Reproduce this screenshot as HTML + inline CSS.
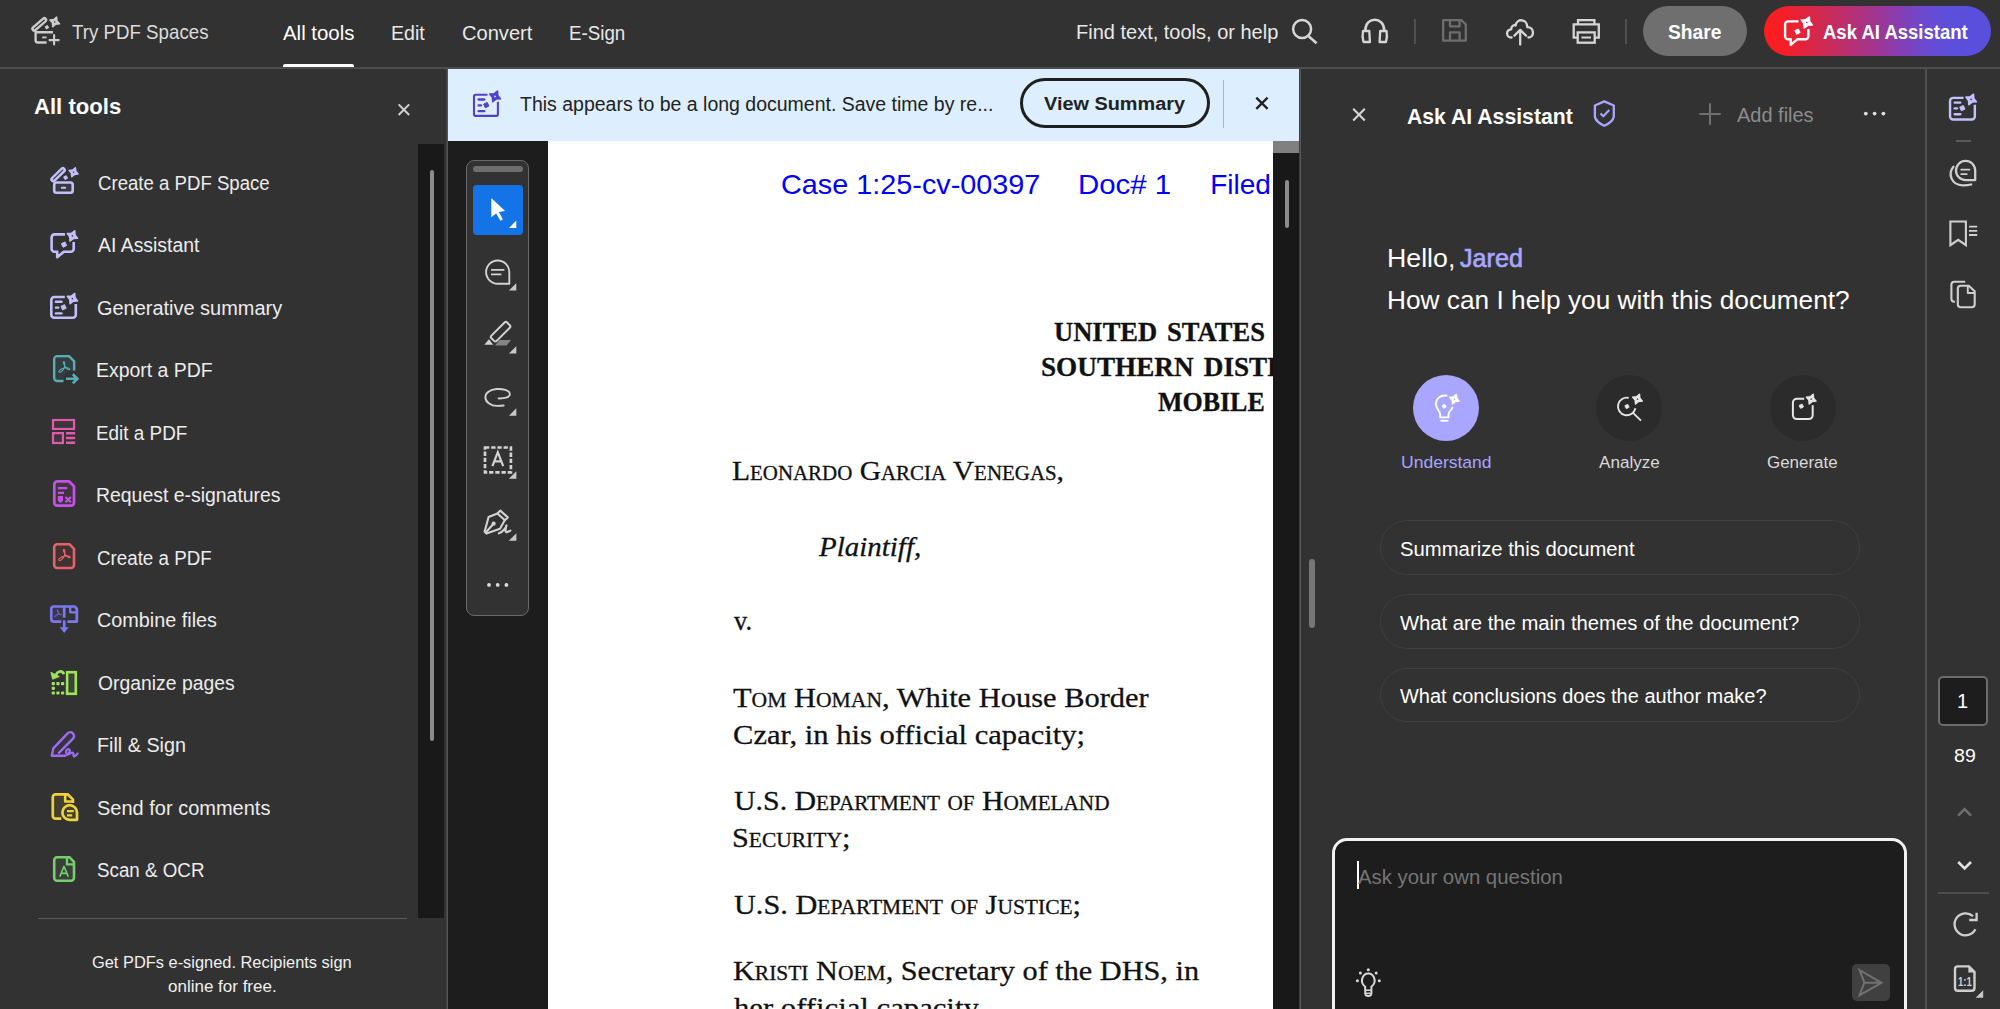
<!DOCTYPE html>
<html lang="en">
<head>
<meta charset="utf-8">
<title>Adobe Acrobat</title>
<style>
html,body{margin:0;padding:0}
body{width:2000px;height:1009px;overflow:hidden;position:relative;background:#323232;font-family:"Liberation Sans",sans-serif}
.a{position:absolute}
.t{position:absolute;white-space:nowrap;transform-origin:0 0;display:block}
svg{position:absolute;overflow:visible}
header,aside,main,nav,section{display:block;position:static;margin:0;padding:0}

#topbar{left:0;top:0;width:2000px;height:67px;background:#323232}
#topline{left:0;top:67px;width:2000px;height:2px;background:#4e4e4e}
#left{left:0;top:69px;width:446px;height:940px;background:#323232}
#leftline{left:446px;top:69px;width:2px;height:940px;background:linear-gradient(90deg,#404040 0,#404040 50%,#585858 50%,#585858 100%)}
#doc{left:448px;top:69px;width:851px;height:940px;background:#1d1d1d;overflow:hidden}
#banner{left:448px;top:69px;width:851px;height:72px;background:#ddefff}
#page{left:548px;top:141px;width:725px;height:868px;background:#fff;overflow:hidden}
#docline{left:1299px;top:69px;width:2px;height:940px;background:linear-gradient(90deg,#404040 0,#404040 50%,#585858 50%,#585858 100%)}
#right{left:1301px;top:69px;width:624px;height:940px;background:#323232}
#railline{left:1925px;top:69px;width:2px;height:940px;background:#4e4e4e}
#rail{left:1927px;top:69px;width:73px;height:940px;background:#323232}
.pill{left:1379.5px;width:480.5px;height:54.5px;box-sizing:border-box;border:1.5px solid #3f3f3f;border-radius:28px}
.circ{width:66px;height:66px;border-radius:50%;top:374.5px}
</style>
</head>
<body>
<!-- ================= top application bar ================= -->
<header id="appbar">
<div class="a" id="topbar"></div>
<div class="a" id="topline"></div>
<div class="a" style="left:283px;top:64px;width:71px;height:3px;background:#fff;border-radius:2px 2px 0 0"></div>
<div class="a" style="left:1414px;top:19px;width:1.5px;height:25px;background:#505050"></div>
<div class="a" style="left:1625px;top:19px;width:1.5px;height:25px;background:#505050"></div>
<div class="a" id="share-btn" style="left:1643px;top:6px;width:103.5px;height:50px;border-radius:25px;background:#6f6f6f"></div>
<div class="a" id="askai-btn" style="left:1764px;top:6px;width:227px;height:50px;border-radius:25px;background:linear-gradient(90deg,#ff1c1c 0%,#f21f2a 10%,#cc2a55 27%,#a03590 49%,#8040b8 62%,#6a4ad0 71%,#5b4fdc 82%,#5a4fdd 100%)"></div>
<span class="t" id="t0" style='left:71.56px;top:18.87px;font:400 20.3px/26.39px "Liberation Sans", sans-serif;color:#dcdcdc;transform:scaleX(0.9221);'>Try PDF Spaces</span>
<span class="t" id="t1" style='left:283.34px;top:19.57px;font:400 20.5px/26.65px "Liberation Sans", sans-serif;color:#ffffff;transform:scaleX(0.9956);'>All tools</span>
<span class="t" id="t2" style='left:391.01px;top:19.57px;font:400 20.5px/26.65px "Liberation Sans", sans-serif;color:#e8e8e8;transform:scaleX(0.9569);'>Edit</span>
<span class="t" id="t3" style='left:461.61px;top:19.57px;font:400 20.5px/26.65px "Liberation Sans", sans-serif;color:#e8e8e8;transform:scaleX(0.9805);'>Convert</span>
<span class="t" id="t4" style='left:568.54px;top:19.57px;font:400 20.5px/26.65px "Liberation Sans", sans-serif;color:#e8e8e8;transform:scaleX(0.9147);'>E-Sign</span>
<span class="t" id="t5" style='left:1075.75px;top:19.47px;font:400 20.5px/26.65px "Liberation Sans", sans-serif;color:#e8e8e8;transform:scaleX(0.9755);'>Find text, tools, or help</span>
<span class="t" id="t6" style='left:1667.90px;top:19.22px;font:700 20.5px/26.65px "Liberation Sans", sans-serif;color:#ffffff;transform:scaleX(0.9388);'>Share</span>
<span class="t" id="t7" style='left:1822.50px;top:19.22px;font:700 20.5px/26.65px "Liberation Sans", sans-serif;color:#ffffff;transform:scaleX(0.9031);'>Ask AI Assistant</span>
</header>

<!-- ================= left "All tools" panel ================= -->
<aside id="tools-panel">
<div class="a" id="left"></div>
<div class="a" id="leftline"></div>
<div class="a" style="left:418px;top:144px;width:26px;height:773.5px;background:#191919"></div>
<div class="a" style="left:430px;top:170px;width:3.5px;height:571px;background:#8c8c8c;border-radius:2px"></div>
<div class="a" style="left:38px;top:917.7px;width:369px;height:1.5px;background:#5c5c5c"></div>
<span class="t" id="t8" style='left:34.01px;top:93.48px;font:700 22.3px/28.99px "Liberation Sans", sans-serif;color:#ffffff;transform:scaleX(0.9922);'>All tools</span>
<span class="t" id="t9" style='left:97.52px;top:170.52px;font:400 19.6px/25.48px "Liberation Sans", sans-serif;color:#ececec;transform:scaleX(0.9497);'>Create a PDF Space</span>
<span class="t" id="t10" style='left:97.56px;top:233.02px;font:400 19.6px/25.48px "Liberation Sans", sans-serif;color:#ececec;transform:scaleX(0.9913);'>AI Assistant</span>
<span class="t" id="t11" style='left:97.39px;top:295.52px;font:400 19.6px/25.48px "Liberation Sans", sans-serif;color:#ececec;transform:scaleX(1.0179);'>Generative summary</span>
<span class="t" id="t12" style='left:96.24px;top:358.02px;font:400 19.6px/25.48px "Liberation Sans", sans-serif;color:#ececec;transform:scaleX(0.9919);'>Export a PDF</span>
<span class="t" id="t13" style='left:96.39px;top:420.52px;font:400 19.6px/25.48px "Liberation Sans", sans-serif;color:#ececec;transform:scaleX(0.9641);'>Edit a PDF</span>
<span class="t" id="t14" style='left:96.23px;top:483.02px;font:400 19.6px/25.48px "Liberation Sans", sans-serif;color:#ececec;transform:scaleX(0.9910);'>Request e-signatures</span>
<span class="t" id="t15" style='left:97.47px;top:545.52px;font:400 19.6px/25.48px "Liberation Sans", sans-serif;color:#ececec;transform:scaleX(0.9574);'>Create a PDF</span>
<span class="t" id="t16" style='left:97.39px;top:608.02px;font:400 19.6px/25.48px "Liberation Sans", sans-serif;color:#ececec;transform:scaleX(1.0107);'>Combine files</span>
<span class="t" id="t17" style='left:97.66px;top:670.52px;font:400 19.6px/25.48px "Liberation Sans", sans-serif;color:#ececec;transform:scaleX(0.9875);'>Organize pages</span>
<span class="t" id="t18" style='left:96.76px;top:733.02px;font:400 19.6px/25.48px "Liberation Sans", sans-serif;color:#ececec;transform:scaleX(1.0090);'>Fill &amp; Sign</span>
<span class="t" id="t19" style='left:97.04px;top:795.52px;font:400 19.6px/25.48px "Liberation Sans", sans-serif;color:#ececec;transform:scaleX(1.0207);'>Send for comments</span>
<span class="t" id="t20" style='left:97.19px;top:858.02px;font:400 19.6px/25.48px "Liberation Sans", sans-serif;color:#ececec;transform:scaleX(0.9583);'>Scan &amp; OCR</span>
<span class="t" id="t21" style='left:91.98px;top:951.96px;font:400 17px/22.1px "Liberation Sans", sans-serif;color:#f0f0f0;transform:scaleX(0.9644);'>Get PDFs e-signed. Recipients sign</span>
<span class="t" id="t22" style='left:167.82px;top:975.96px;font:400 17px/22.1px "Liberation Sans", sans-serif;color:#f0f0f0;transform:scaleX(0.9996);'>online for free.</span>
</aside>

<!-- ================= document viewer ================= -->
<main id="viewer">
<div class="a" id="doc"></div>
<div class="a" id="page"></div>
<div class="a" style="left:1273px;top:141px;width:26px;height:868px;background:#181818"></div>
<div class="a" style="left:1273px;top:141px;width:26px;height:12px;background:#808080"></div>
<div class="a" style="left:1285.3px;top:180px;width:3.4px;height:48px;background:#8c8c8c;border-radius:2px"></div>
<div class="a" id="docline"></div>
<section id="summary-banner">
<div class="a" id="banner"></div>
<div class="a" style="left:1019.5px;top:77.7px;width:190.5px;height:50.4px;box-sizing:border-box;border:3px solid #1f1f1f;border-radius:26px"></div>
<div class="a" style="left:1223px;top:80px;width:1px;height:48px;background:#b9b3aa"></div>
<span class="t" id="t23" style='left:520.36px;top:91.77px;font:400 19.6px/25.48px "Liberation Sans", sans-serif;color:#222222;transform:scaleX(0.9947);'>This appears to be a long document. Save time by re...</span>
<span class="t" id="t24" style='left:1044.06px;top:92.37px;font:700 18.9px/24.57px "Liberation Sans", sans-serif;color:#222222;transform:scaleX(1.0517);'>View Summary</span>
</section>
<nav id="quick-tools">
<div class="a" style="left:466px;top:160px;width:63px;height:456px;box-sizing:border-box;border:1.5px solid #6a6a6a;border-radius:8px;background:#323232"></div>
<div class="a" style="left:472.8px;top:166px;width:50px;height:6px;border-radius:3px;background:#6e6e6e"></div>
<div class="a" style="left:472.8px;top:185px;width:50.4px;height:50px;border-radius:4px;background:#1473e6"></div>
</nav>
<div class="a" id="pageclip" style="left:548px;top:141px;width:725px;height:868px;overflow:hidden"><div class="a" style="left:-548px;top:-141px;width:2000px;height:1009px">
<span class="t" id="d0" style='left:781.44px;top:166.90px;font:400 28px/36.4px "Liberation Sans", sans-serif;color:#0000ff;transform:scaleX(1.0286);'>Case 1:25-cv-00397</span>
<span class="t" id="d1" style='left:1078.27px;top:166.90px;font:400 28px/36.4px "Liberation Sans", sans-serif;color:#0000ff;transform:scaleX(1.0509);'>Doc# 1</span>
<span class="t" id="d2" style='left:1210.20px;top:166.90px;font:400 28px/36.4px "Liberation Sans", sans-serif;color:#0000ff;transform:scaleX(1.0000);'>Filed 07/29/25</span>
<span class="t" id="d3" style='left:1054.20px;top:313.80px;font:700 28.2px/36.66px "Liberation Serif", serif;color:#111;transform:scaleX(0.9411);word-spacing:3.5px;-webkit-text-stroke:0.3px #111;'>UNITED STATES DISTRICT COURT</span>
<span class="t" id="d4" style='left:1041.10px;top:349.10px;font:700 28.2px/36.66px "Liberation Serif", serif;color:#111;transform:scaleX(0.9646);word-spacing:3.5px;-webkit-text-stroke:0.3px #111;'>SOUTHERN DISTRICT OF ALABAMA</span>
<span class="t" id="d5" style='left:1158.20px;top:383.80px;font:700 28.2px/36.66px "Liberation Serif", serif;color:#111;transform:scaleX(0.9207);word-spacing:3.5px;-webkit-text-stroke:0.3px #111;'>MOBILE DIVISION</span>
<span class="t" id="d6" style='left:732.33px;top:453.20px;font:400 28.2px/36.66px "Liberation Serif", serif;color:#111;transform:scaleX(1.0458);font-variant:small-caps;-webkit-text-stroke:0.3px #111;'>Leonardo Garcia Venegas,</span>
<span class="t" id="d7" style='left:819.19px;top:529.30px;font:400 28.2px/36.66px "Liberation Serif", serif;color:#111;transform:scaleX(1.0275);-webkit-text-stroke:0.3px #111;'><i>Plaintiff,</i></span>
<span class="t" id="d8" style='left:733.78px;top:603.10px;font:400 28.2px/36.66px "Liberation Serif", serif;color:#111;transform:scaleX(0.9311);-webkit-text-stroke:0.3px #111;'>v.</span>
<span class="t" id="d9" style='left:732.97px;top:680.20px;font:400 28.2px/36.66px "Liberation Serif", serif;color:#111;transform:scaleX(1.0803);-webkit-text-stroke:0.3px #111;'><span style="font-variant:small-caps">Tom Homan</span>, White House Border</span>
<span class="t" id="d10" style='left:732.61px;top:717.30px;font:400 28.2px/36.66px "Liberation Serif", serif;color:#111;transform:scaleX(1.0840);-webkit-text-stroke:0.3px #111;'>Czar, in his official capacity;</span>
<span class="t" id="d11" style='left:733.60px;top:782.90px;font:400 28.2px/36.66px "Liberation Serif", serif;color:#111;transform:scaleX(1.0591);font-variant:small-caps;-webkit-text-stroke:0.3px #111;'>U.S. Department of Homeland</span>
<span class="t" id="d12" style='left:732.45px;top:820.40px;font:400 28.2px/36.66px "Liberation Serif", serif;color:#111;transform:scaleX(1.0740);font-variant:small-caps;-webkit-text-stroke:0.3px #111;'>Security;</span>
<span class="t" id="d13" style='left:733.56px;top:886.65px;font:400 28.2px/36.66px "Liberation Serif", serif;color:#111;transform:scaleX(1.0745);font-variant:small-caps;-webkit-text-stroke:0.3px #111;'>U.S. Department of Justice;</span>
<span class="t" id="d14" style='left:732.88px;top:952.90px;font:400 28.2px/36.66px "Liberation Serif", serif;color:#111;transform:scaleX(1.0733);-webkit-text-stroke:0.3px #111;'><span style="font-variant:small-caps">Kristi Noem</span>, Secretary of the DHS, in</span>
<span class="t" id="d15" style='left:733.62px;top:990.20px;font:400 28.2px/36.66px "Liberation Serif", serif;color:#111;transform:scaleX(1.0885);-webkit-text-stroke:0.3px #111;'>her official capacity</span>
</div></div>
</main>

<!-- ================= AI assistant panel ================= -->
<aside id="assistant-panel">
<div class="a" id="right"></div>
<div class="a" style="left:1309px;top:559px;width:6px;height:69px;border-radius:3px;background:#767676"></div>
<div class="a circ" style="left:1413px;background:#a9a6ff"></div>
<div class="a circ" style="left:1596px;background:#2b2b2b"></div>
<div class="a circ" style="left:1770px;background:#2b2b2b"></div>
<div class="a pill" style="top:520.3px"></div>
<div class="a pill" style="top:594.1px"></div>
<div class="a pill" style="top:667.6px"></div>
<div class="a" id="ask-input" style="left:1332px;top:838.2px;width:575.4px;height:200px;box-sizing:border-box;border:3px solid #f2f2f2;border-radius:15px;background:#1d1d1d"></div>
<div class="a" style="left:1357px;top:861px;width:1.6px;height:28px;background:#fff"></div>
<div class="a" style="left:1852px;top:964px;width:37.5px;height:37px;border-radius:5px;background:#404040"></div>
<span class="t" id="t25" style='left:1407.23px;top:101.53px;font:700 22.7px/29.51px "Liberation Sans", sans-serif;color:#ffffff;transform:scaleX(0.9346);'>Ask AI Assistant</span>
<span class="t" id="t26" style='left:1736.63px;top:101.77px;font:400 20.6px/26.78px "Liberation Sans", sans-serif;color:#8c8c8c;transform:scaleX(0.9699);'>Add files</span>
<span class="t" id="t27" style='left:1386.68px;top:241.99px;font:400 25.5px/33.15px "Liberation Sans", sans-serif;color:#ffffff;transform:scaleX(1.0481);'>Hello,</span>
<span class="t" id="t28" style='left:1460.43px;top:241.99px;font:400 25.5px/33.15px "Liberation Sans", sans-serif;color:#a8a5ff;transform:scaleX(0.9869);-webkit-text-stroke:0.7px #a8a5ff;'>Jared</span>
<span class="t" id="t29" style='left:1386.73px;top:284.49px;font:400 25.5px/33.15px "Liberation Sans", sans-serif;color:#ffffff;transform:scaleX(1.0297);'>How can I help you with this document?</span>
<span class="t" id="t30" style='left:1400.60px;top:451.26px;font:400 17.2px/22.36px "Liberation Sans", sans-serif;color:#a8a5ff;transform:scaleX(1.0197);'>Understand</span>
<span class="t" id="t31" style='left:1599.34px;top:451.26px;font:400 17.2px/22.36px "Liberation Sans", sans-serif;color:#dadada;transform:scaleX(0.9954);'>Analyze</span>
<span class="t" id="t32" style='left:1767.30px;top:451.26px;font:400 17.2px/22.36px "Liberation Sans", sans-serif;color:#dadada;transform:scaleX(0.9855);'>Generate</span>
<span class="t" id="t33" style='left:1399.53px;top:536.37px;font:400 20px/26.0px "Liberation Sans", sans-serif;color:#ffffff;transform:scaleX(1.0144);'>Summarize this document</span>
<span class="t" id="t34" style='left:1399.99px;top:609.97px;font:400 20px/26.0px "Liberation Sans", sans-serif;color:#ffffff;transform:scaleX(1.0116);'>What are the main themes of the document?</span>
<span class="t" id="t35" style='left:1399.99px;top:683.27px;font:400 20px/26.0px "Liberation Sans", sans-serif;color:#ffffff;transform:scaleX(0.9992);'>What conclusions does the author make?</span>
<span class="t" id="t36" style='left:1358.40px;top:863.97px;font:400 20.5px/26.65px "Liberation Sans", sans-serif;color:#757575;transform:scaleX(0.9932);'>Ask your own question</span>
</aside>

<!-- ================= right rail ================= -->
<nav id="rail-nav">
<div class="a" id="railline"></div>
<div class="a" id="rail"></div>
<div class="a" style="left:1956px;top:140px;width:14.5px;height:1.5px;background:#5a5a5a"></div>
<div class="a" style="left:1938px;top:675.6px;width:49.5px;height:50px;box-sizing:border-box;border:2px solid #6c6c6c;border-radius:5px;background:#1d1d1d"></div>
<div class="a" style="left:1937.5px;top:892px;width:51.5px;height:1.5px;background:#4d4d4d"></div>
<span class="t" id="t37" style='left:1957.10px;top:688.27px;font:400 20px/26.0px "Liberation Sans", sans-serif;color:#ffffff;transform:scaleX(1.0000);'>1</span>
<span class="t" id="t38" style='left:1957.60px;top:973.94px;font:700 12.6px/16.38px "Liberation Sans", sans-serif;color:#cfcfcf;transform:scaleX(0.7556);'>1:1</span>
<span class="t" id="t39" style='left:1953.73px;top:743.96px;font:400 18.5px/24.05px "Liberation Sans", sans-serif;color:#ffffff;transform:scaleX(1.0576);'>89</span>
</nav>

<!-- ================= icons (vector overlay) ================= -->
<svg width="2000" height="1009" viewBox="0 0 2000 1009" style="left:0;top:0">
<path d="M34.2,28.8 L44.3,20" stroke="#cbcbcb" stroke-width="5.9" stroke-linecap="round"/><path d="M34.4,28.6 L44.1,20.2" stroke="#323232" stroke-width="1.25" stroke-linecap="round"/><g fill="none" stroke="#cbcbcb" stroke-width="2.4"><path d="M53,32.3 H35.6 V40.3 Q35.6,42.5 37.8,42.5 H46.6"/><path d="M42.2,37.4 h4.4" stroke-width="1.8"/><path d="M48.7,40.1 h10.8 M54.1,34.3 v10.9" stroke-width="2.1"/></g>
<path transform="translate(54.70 21.90) rotate(22)" d="M0.00,-5.15 L1.75,-1.75 L5.15,-0.00 L1.75,1.75 L0.00,5.15 L-1.75,1.75 L-5.15,0.00 L-1.75,-1.75Z M1.49,0 A1.49,1.49 0 1 0 -1.49,0 A1.49,1.49 0 1 0 1.49,0Z" fill="#cbcbcb" fill-rule="evenodd" stroke="#cbcbcb" stroke-width="1.5" stroke-linejoin="round"/>
<path transform="translate(46.90 27.20) rotate(20)" d="M0.00,-1.79 L0.98,-0.98 L1.79,-0.00 L0.98,0.98 L0.00,1.79 L-0.98,0.98 L-1.79,0.00 L-0.98,-0.98Z" fill="#cbcbcb" fill-rule="evenodd" stroke="#cbcbcb" stroke-width="0.9" stroke-linejoin="round"/>
<g fill="none" stroke="#d6d6d6" stroke-width="2.5"><circle cx="1302.1" cy="29" r="9"/><path d="M1308.6,36.2 L1316.6,43.3"/></g>
<g fill="none" stroke="#d6d6d6" stroke-width="2.3" stroke-linejoin="round"><path d="M1365.3,30.5 C1365.3,16.2 1384.2,16.2 1384.2,30.5" stroke-width="2.5"/><path d="M1363,31 h6.3 l0.6,11 h-6.4 q-1.6,-5.5 -0.5,-11z"/><path d="M1386.5,31 h-6.3 l-0.6,11 h6.4 q1.6,-5.5 0.5,-11z"/></g>
<g fill="none" stroke="#6e6e6e" stroke-width="2.3" stroke-linejoin="round"><path d="M1443.2,20.2 H1461.5 L1465.8,24.5 V40.7 H1443.2Z"/><path d="M1450,20.2 V26.3 H1459.6 V20.2 M1450,40.7 V32.3 H1459.6 V40.7"/></g>
<g fill="none" stroke="#d6d6d6" stroke-width="2.3" stroke-linecap="round" stroke-linejoin="round"><path d="M1511.6,37.5 C1506,37.8 1505.3,30 1511.3,29.3 C1511,25.5 1514.5,24.6 1515.6,25.6 C1516.5,18 1527.5,18.5 1527.2,27.2 C1534.5,26.8 1534.8,37.6 1528.4,37.5"/><path d="M1520.2,44.5 V30.5 M1514.4,35.6 L1520.2,29.9 L1526,35.6"/></g>
<g fill="none" stroke="#d6d6d6" stroke-width="2.3" stroke-linejoin="miter"><path d="M1578,23.9 V20.1 H1594.4 V23.9"/><path d="M1577.6,37.6 H1573.7 V24.3 H1598.8 V37.6 H1594.9"/><rect x="1577.7" y="32.4" width="17" height="10.3"/><path d="M1581.4,37.5 h9.6" stroke-width="2"/></g>
<g fill="none" stroke="#ffffff" stroke-width="2.4" stroke-linejoin="round"><path d="M1798.50,21.40 H1788.10 A3,3 0 0 0 1785.10,24.40 V36.30 A3,3 0 0 0 1788.10,39.30 H1790.70 V44.90 L1797.30,39.30 H1805.40 A3,3 0 0 0 1808.40,36.30 V29.00"/></g><path transform="translate(1797.50 31.60) rotate(20)" d="M0.00,-2.80 L1.42,-1.42 L2.80,-0.00 L1.42,1.42 L0.00,2.80 L-1.42,1.42 L-2.80,0.00 L-1.42,-1.42Z" fill="#ffffff" fill-rule="evenodd" stroke="#ffffff" stroke-width="0.9" stroke-linejoin="round"/><path transform="translate(1806.80 22.50) rotate(25)" d="M0.00,-5.95 L2.07,-2.07 L5.95,-0.00 L2.07,2.07 L0.00,5.95 L-2.07,2.07 L-5.95,0.00 L-2.07,-2.07Z M1.68,0 A1.68,1.68 0 1 0 -1.68,0 A1.68,1.68 0 1 0 1.68,0Z" fill="#ffffff" fill-rule="evenodd" stroke="#ffffff" stroke-width="1.7" stroke-linejoin="round"/>
<path d="M398.6,104.4 L409.2,115 M409.2,104.4 L398.6,115" stroke="#d0d0d0" stroke-width="2" fill="none"/>
<rect x="54.2" y="182.5" width="18.5" height="10.3" rx="2.2" fill="#3a3940" stroke="#c3bffb" stroke-width="2.6"/><path d="M61.8,187.7 h3.4" stroke="#c3bffb" stroke-width="2" stroke-linecap="round"/><path d="M53.3,179.4 L62.9,170" stroke="#c3bffb" stroke-width="6" stroke-linecap="round"/><path d="M53.5,179.2 L62.7,170.2" stroke="#323232" stroke-width="1.1" stroke-linecap="round"/>
<path transform="translate(73.60 172.20) rotate(22)" d="M0.00,-4.85 L1.70,-1.70 L4.85,-0.00 L1.70,1.70 L0.00,4.85 L-1.70,1.70 L-4.85,0.00 L-1.70,-1.70Z M1.46,0 A1.46,1.46 0 1 0 -1.46,0 A1.46,1.46 0 1 0 1.46,0Z" fill="#c3bffb" fill-rule="evenodd" stroke="#c3bffb" stroke-width="1.5" stroke-linejoin="round"/>
<path transform="translate(65.60 177.60) rotate(20)" d="M0.00,-2.01 L1.08,-1.08 L2.01,-0.00 L1.08,1.08 L0.00,2.01 L-1.08,1.08 L-2.01,0.00 L-1.08,-1.08Z" fill="#c3bffb" fill-rule="evenodd" stroke="#c3bffb" stroke-width="0.9" stroke-linejoin="round"/>
<g fill="none" stroke="#c3bffb" stroke-width="2.6" stroke-linejoin="round"><path d="M65.00,234.40 H54.60 A3,3 0 0 0 51.60,237.40 V248.70 A3,3 0 0 0 54.60,251.70 H57.20 V257.30 L63.80,251.70 H70.70 A3,3 0 0 0 73.70,248.70 V242.00"/></g><path transform="translate(64.00 244.60) rotate(20)" d="M0.00,-2.80 L1.42,-1.42 L2.80,-0.00 L1.42,1.42 L0.00,2.80 L-1.42,1.42 L-2.80,0.00 L-1.42,-1.42Z" fill="#c3bffb" fill-rule="evenodd" stroke="#c3bffb" stroke-width="0.9" stroke-linejoin="round"/><path transform="translate(72.40 235.90) rotate(25)" d="M0.00,-5.60 L1.95,-1.95 L5.60,-0.00 L1.95,1.95 L0.00,5.60 L-1.95,1.95 L-5.60,0.00 L-1.95,-1.95Z M1.59,0 A1.59,1.59 0 1 0 -1.59,0 A1.59,1.59 0 1 0 1.59,0Z" fill="#c3bffb" fill-rule="evenodd" stroke="#c3bffb" stroke-width="1.6" stroke-linejoin="round"/>
<g fill="none" stroke="#c3bffb" stroke-width="2.6" stroke-linecap="butt"><path d="M64.80,297.00 H54.30 A3,3 0 0 0 51.30,300.00 V314.80 A3,3 0 0 0 54.30,317.80 H72.80 A3,3 0 0 0 75.80,314.80 V304.00"/><path d="M55.90,301.70 h5.70 M55.90,307.60 h2.40 M55.90,313.40 h5.70" stroke-width="2.40" stroke-linecap="round"/></g><path transform="translate(63.60 307.30) rotate(20)" d="M0.00,-2.80 L1.42,-1.42 L2.80,-0.00 L1.42,1.42 L0.00,2.80 L-1.42,1.42 L-2.80,0.00 L-1.42,-1.42Z" fill="#c3bffb" fill-rule="evenodd" stroke="#c3bffb" stroke-width="0.9" stroke-linejoin="round"/><path transform="translate(72.40 298.60) rotate(24)" d="M0.00,-5.60 L1.95,-1.95 L5.60,-0.00 L1.95,1.95 L0.00,5.60 L-1.95,1.95 L-5.60,0.00 L-1.95,-1.95Z M1.59,0 A1.59,1.59 0 1 0 -1.59,0 A1.59,1.59 0 1 0 1.59,0Z" fill="#c3bffb" fill-rule="evenodd" stroke="#c3bffb" stroke-width="1.6" stroke-linejoin="round"/>
<path d="M63.5,380.8 H57.3 A3,3 0 0 1 54.3,377.8 V359.3 A3,3 0 0 1 57.3,356.3 H69 L74,361.3 V370.6" fill="none" stroke="#5aacb5" stroke-width="2.7"/><path d="M55.6,357.6 H68.5 L72.7,361.8 V371 C66,371 64,375 63.5,379.5 H55.6Z" fill="#333d3f"/><path d="M66,378.7 H76.5 M72.8,374.2 L77.4,378.7 L72.8,383.2" fill="none" stroke="#5aacb5" stroke-width="2.6"/>
<g transform="translate(64.3 367.5) scale(0.95)" fill="none" stroke="#5aacb5" stroke-width="1.1" stroke-linecap="round"><path d="M-0.6,-6.2 C0.8,-6.4 0.6,-2.5 0,0 C-1.2,3 -3.5,5.6 -5.4,4.8 C-6.6,4 -4.5,2.4 -2.2,1.4 C0.5,0.3 3.5,0 5.4,0.9 C6.6,1.8 5,2.6 3.6,1.8 C2,0.8 -0.2,-2 -0.9,-4.5 C-1.2,-5.6 -1,-6.2 -0.6,-6.2Z"/></g>
<g fill="#40343b" stroke="#de5ca9" stroke-width="2.2"><rect x="53" y="420" width="21.05" height="8.95"/><rect x="53" y="433.1" width="9.95" height="9.9"/></g><path d="M66,433.2 h9.15 M66,438 h9.15 M66,442.8 h9.15" stroke="#de5ca9" stroke-width="2.4"/>
<path d="M57.3,481.3 H69 L74,486.3 V502.7 A3,3 0 0 1 71,505.7 H57.3 A3,3 0 0 1 54.3,502.7 V484.3 A3,3 0 0 1 57.3,481.3Z" fill="#41353f" stroke="#c352e6" stroke-width="2.7" stroke-linejoin="round"/><path d="M57.9,488.1 h9.3 M57.9,492.9 h6.1" stroke="#c352e6" stroke-width="2.3"/><path d="M57.9,496 h5.1 v4.6 l-2.55,2.7 l-2.55,-2.7z" fill="#c352e6"/><path d="M65.5,496.9 l5.4,5.4 m0,-5.4 l-5.4,5.4" stroke="#c352e6" stroke-width="2.1"/>
<path d="M57.2,544.2 H69.4 L74,548.8000000000001 V565 A3,3 0 0 1 71,568 H57.2 A3,3 0 0 1 54.2,565 V547.2 A3,3 0 0 1 57.2,544.2Z" fill="#3e3332" stroke="#e5626a" stroke-width="2.6" stroke-linejoin="round"/>
<g transform="translate(64.4 555.5) scale(1.0)" fill="none" stroke="#e5626a" stroke-width="1.15" stroke-linecap="round"><path d="M-0.6,-6.2 C0.8,-6.4 0.6,-2.5 0,0 C-1.2,3 -3.5,5.6 -5.4,4.8 C-6.6,4 -4.5,2.4 -2.2,1.4 C0.5,0.3 3.5,0 5.4,0.9 C6.6,1.8 5,2.6 3.6,1.8 C2,0.8 -0.2,-2 -0.9,-4.5 C-1.2,-5.6 -1,-6.2 -0.6,-6.2Z"/></g>
<path d="M52.6,606.4 H62.8 V617 H62.8 V621.5 H52.6Z" fill="#37364a"/><g fill="none" stroke="#7b78f0" stroke-width="2.7" stroke-linejoin="round"><path d="M61.2,621.6 H53.8 A2.5,2.5 0 0 1 51.3,619.1 V609 A2.5,2.5 0 0 1 53.8,606.5 H64.2 V617.8"/><path d="M64.2,606.5 H74.6 L76.8,608.7 V621.6 H67.4"/><path d="M70.2,606.5 V612.3 H76.8" stroke-width="2.3"/><path d="M64.2,620.3 V629"/></g><path d="M59.7,627.2 H68.7 L64.2,633.1Z" fill="#7b78f0"/>
<g transform="translate(58 613.8) scale(0.62)" fill="none" stroke="#7b78f0" stroke-width="1.0" stroke-linecap="round"><path d="M-0.6,-6.2 C0.8,-6.4 0.6,-2.5 0,0 C-1.2,3 -3.5,5.6 -5.4,4.8 C-6.6,4 -4.5,2.4 -2.2,1.4 C0.5,0.3 3.5,0 5.4,0.9 C6.6,1.8 5,2.6 3.6,1.8 C2,0.8 -0.2,-2 -0.9,-4.5 C-1.2,-5.6 -1,-6.2 -0.6,-6.2Z"/></g>
<rect x="67.1" y="672.2" width="8.7" height="21.6" fill="#3d4436" stroke="#9ee35a" stroke-width="2.6"/>
<g fill="#9ee35a"><rect x="51.70" y="682.00" width="3.2" height="3.2" rx="0.8"/><rect x="56.35" y="682.00" width="3.2" height="3.2" rx="0.8"/><rect x="61.00" y="682.00" width="3.2" height="3.2" rx="0.8"/><rect x="51.70" y="686.70" width="3.2" height="3.2" rx="0.8"/><rect x="51.70" y="691.40" width="3.2" height="3.2" rx="0.8"/><rect x="56.35" y="691.40" width="3.2" height="3.2" rx="0.8"/><rect x="61.00" y="691.40" width="3.2" height="3.2" rx="0.8"/><path d="M50.9,672.2 L52.6,679.3 L59.4,676.6Z" stroke="#9ee35a" stroke-width="0.8" stroke-linejoin="round"/></g><path d="M55.5,676 C57.5,670.2 62.5,670.3 63.9,674.2" fill="none" stroke="#9ee35a" stroke-width="2.6"/>
<path d="M52.3,755.2 L53.6,748.6 L67.7,733.6 A3.4,3.4 0 0 1 73,738.4 L58.9,752.6Z" fill="#37333c"/><g fill="none" stroke="#9d6cf0" stroke-width="2.4" stroke-linejoin="round" stroke-linecap="round"><path d="M58.9,752.9 L73,738.6 A3.5,3.5 0 0 0 67.6,733.4 L53.3,748.4 L51.8,755.8 H64.5"/><path d="M64.5,755.8 C67.5,755.6 71.2,751.6 69.3,749.6 C67.3,747.8 64.6,751.6 67.2,754 C69,755.6 71.3,751.8 72.8,752.6 C74.2,753.4 72.6,756.6 74.4,756.5 C75.8,756.3 76.4,754.2 77.7,753.6" stroke-width="2.2"/></g>
<path d="M54.2,795.6 H65 V801.5 H72.8 V803 C64,802 60,810 62.5,817.4 H54.2Z" fill="#433f30"/><g fill="none" stroke="#f0d23c" stroke-width="2.7" stroke-linejoin="round"><path d="M61.3,818.7 H55.6 A2.8,2.8 0 0 1 52.8,815.9 V797.1 A2.8,2.8 0 0 1 55.6,794.3 H67.6 L72.9,799.4 V803"/><path d="M65.2,794.3 V801.5 H72.9" stroke-width="2.6"/><path d="M77,819.8 H69.7 A7.3,7.3 0 1 1 77,812.5Z" fill="#433f30"/><path d="M67,811.2 h6.8 M67,815.4 h5.2" stroke-width="2.2"/></g>
<path d="M57.2,857.2 H69.4 L74,861.8000000000001 V877.8 A3,3 0 0 1 71,880.8 H57.2 A3,3 0 0 1 54.2,877.8 V860.2 A3,3 0 0 1 57.2,857.2Z" fill="#3a4039" stroke="#75cf6c" stroke-width="2.6" stroke-linejoin="round"/><path d="M67,857.2 V864.3 H74" fill="none" stroke="#75cf6c" stroke-width="2.3"/><path d="M59.8,876.8 L64,866.4 L68.3,876.8 M61.2,873.4 H66.9" fill="none" stroke="#75cf6c" stroke-width="1.6" stroke-linejoin="round"/>
<g fill="none" stroke="#5042cc" stroke-width="2.1" stroke-linecap="butt"><path d="M487.50,94.80 H475.60 A1.6,1.6 0 0 0 474.00,96.40 V114.30 A1.6,1.6 0 0 0 475.60,115.90 H496.30 A1.6,1.6 0 0 0 497.90,114.30 V101.80"/><path d="M478.55,99.50 h5.80 M478.55,105.40 h2.50 M478.55,111.20 h5.80" stroke-width="2.30" stroke-linecap="round"/></g><path transform="translate(486.30 105.10) rotate(20)" d="M0.00,-2.80 L1.42,-1.42 L2.80,-0.00 L1.42,1.42 L0.00,2.80 L-1.42,1.42 L-2.80,0.00 L-1.42,-1.42Z" fill="#5042cc" fill-rule="evenodd" stroke="#5042cc" stroke-width="0.9" stroke-linejoin="round"/><path transform="translate(495.10 96.40) rotate(24)" d="M0.00,-5.75 L1.96,-1.96 L5.75,-0.00 L1.96,1.96 L0.00,5.75 L-1.96,1.96 L-5.75,0.00 L-1.96,-1.96Z M1.66,0 A1.66,1.66 0 1 0 -1.66,0 A1.66,1.66 0 1 0 1.66,0Z" fill="#5042cc" fill-rule="evenodd" stroke="#5042cc" stroke-width="1.7" stroke-linejoin="round"/>
<path d="M1256.3,97.6 L1267.6,108.9 M1267.6,97.6 L1256.3,108.9" stroke="#222" stroke-width="2.3" fill="none"/>
<path d="M491.3,198 L505.1,211 L498.9,212 L502.9,219.5 L500.5,220.7 L496.1,213.6 L491.3,217.2Z" fill="#fff"/>
<path d="M516.3,220.6 L516.3,227.9 L508.99999999999994,227.9Z" fill="#ffffff"/>
<g fill="none" stroke="#d2d2d2" stroke-width="1.9"><path d="M509.3,283.7 H497.7 A11.6,11.6 0 1 1 509.3,272.1Z" stroke-linejoin="round"/><path d="M491,269.8 h13.4 M491,274.3 h10.4" stroke-width="1.7"/></g>
<path d="M516.3,283.20000000000005 L516.3,290.6 L508.9,290.6Z" fill="#c8c8c8"/>
<rect x="-11.1" y="-3.7" width="22.2" height="7.4" rx="1.8" transform="translate(500.6 331.7) rotate(-45)" fill="none" stroke="#d2d2d2" stroke-width="2"/><path d="M484.3,344.8 L488.9,339.2 L493.3,344.8Z" fill="#d2d2d2"/><path d="M499.4,340 H511.1 L506.6,345.4 H495Z" fill="#848484"/>
<path d="M516.3,346.20000000000005 L516.3,353.6 L508.9,353.6Z" fill="#c8c8c8"/>
<path d="M498.6,398.4 C503.5,398.6 510,397.6 509.9,394.2 C509.8,390.2 502.5,388.6 496.5,389 C490,389.5 485.2,393 485.4,397.6 C485.7,402.4 491,405.9 497,405.9 C499.5,405.9 501.8,405.8 503.7,405.5" fill="none" stroke="#d2d2d2" stroke-width="1.9" stroke-linecap="round"/>
<path d="M516.3,408.3 L516.3,415.7 L508.9,415.7Z" fill="#c8c8c8"/>
<rect x="485" y="447.5" width="25.9" height="24.8" fill="none" stroke="#d2d2d2" stroke-width="2.7" stroke-dasharray="4.3 1.9" stroke-dashoffset="0"/><path d="M492.4,466.2 L497.8,452.2 L503.2,466.2 M494.2,461.4 H501.4" fill="none" stroke="#d2d2d2" stroke-width="2.2" stroke-linejoin="miter"/>
<path d="M516.4,471.2 L516.4,478.8 L508.79999999999995,478.8Z" fill="#c8c8c8"/>
<g fill="none" stroke="#d2d2d2" stroke-width="2.1" stroke-linejoin="round" stroke-linecap="round"><path d="M497.4,513.4 L500.3,510.6 L507.8,517.4 L504.9,520.3Z"/><path d="M497.4,513.6 L488.6,517 L484.6,531.6 L486.4,533.6 L500,528.8 L504.7,520.3"/><path d="M486,532.2 L492.6,524.8"/><path d="M499,533.3 C502.5,532 506.3,527.6 506.5,525.6 C506.6,524.6 505.4,528.5 505.6,531 C505.8,533.4 508.4,531.6 510.3,530.6" stroke-width="2.2"/></g><circle cx="493.6" cy="523.7" r="2.1" fill="#d2d2d2"/>
<path d="M516.4,533.1999999999999 L516.4,540.8 L508.79999999999995,540.8Z" fill="#c8c8c8"/>
<g fill="#dcdcdc"><circle cx="489" cy="584.9" r="1.9"/><circle cx="497.7" cy="584.9" r="1.9"/><circle cx="506.4" cy="584.9" r="1.9"/></g>
<path d="M1353.2,108.8 L1364.8,120.4 M1364.8,108.8 L1353.2,120.4" stroke="#d6d6d6" stroke-width="2.1" fill="none"/>
<g fill="none" stroke="#a9a6ff" stroke-linejoin="round"><path d="M1604.3,101.4 L1613.8,105.5 V116.5 C1613.2,120.5 1609,123.6 1604.3,125.8 C1599.6,123.6 1595.4,120.5 1594.9,116.5 V105.5Z" stroke-width="2.3"/><path d="M1600.5,113.5 L1603.3,116.3 L1609.3,110" stroke-width="2.1"/></g>
<path d="M1699.3,114 h21.5 M1710,103.2 v21.6" stroke="#6f6f6f" stroke-width="2.1" fill="none"/>
<g fill="#e0e0e0"><circle cx="1865.8" cy="113.6" r="1.9"/><circle cx="1874.6" cy="113.6" r="1.9"/><circle cx="1883.4" cy="113.6" r="1.9"/></g>
<g fill="none" stroke="#ffffff" stroke-width="1.9" stroke-linecap="round" stroke-linejoin="round"><path d="M1446.6,395.6 C1440.5,394.6 1435.6,399 1436,404.6 C1436.3,409.2 1440.2,411 1440.2,414.4 V417.4 H1448.5 V414.4 C1448.6,411.6 1451.2,410.4 1452.4,407.6"/><path d="M1441.2,420.7 h6.4"/></g>
<path transform="translate(1444.20 406.30) rotate(20)" d="M0.00,-2.01 L1.08,-1.08 L2.01,-0.00 L1.08,1.08 L0.00,2.01 L-1.08,1.08 L-2.01,0.00 L-1.08,-1.08Z" fill="#ffffff" fill-rule="evenodd" stroke="#ffffff" stroke-width="0.9" stroke-linejoin="round"/>
<path transform="translate(1454.40 399.20) rotate(22)" d="M0.00,-5.20 L1.79,-1.79 L5.20,-0.00 L1.79,1.79 L0.00,5.20 L-1.79,1.79 L-5.20,0.00 L-1.79,-1.79Z M1.44,0 A1.44,1.44 0 1 0 -1.44,0 A1.44,1.44 0 1 0 1.44,0Z" fill="#ffffff" fill-rule="evenodd" stroke="#ffffff" stroke-width="1.4" stroke-linejoin="round"/>
<g fill="none" stroke="#e6e6e6" stroke-width="1.9"><path d="M1628.7,397.9 A8.8,8.8 0 1 0 1635.4,408.2"/><path d="M1633,412.9 L1641,420.6"/></g>
<path transform="translate(1627.00 406.50) rotate(20)" d="M0.00,-2.24 L1.18,-1.18 L2.24,-0.00 L1.18,1.18 L0.00,2.24 L-1.18,1.18 L-2.24,0.00 L-1.18,-1.18Z" fill="#e6e6e6" fill-rule="evenodd" stroke="#e6e6e6" stroke-width="0.9" stroke-linejoin="round"/>
<path transform="translate(1637.50 399.10) rotate(22)" d="M0.00,-5.30 L1.82,-1.82 L5.30,-0.00 L1.82,1.82 L0.00,5.30 L-1.82,1.82 L-5.30,0.00 L-1.82,-1.82Z M1.45,0 A1.45,1.45 0 1 0 -1.45,0 A1.45,1.45 0 1 0 1.45,0Z" fill="#e6e6e6" fill-rule="evenodd" stroke="#e6e6e6" stroke-width="1.4" stroke-linejoin="round"/>
<path d="M1804.2,398.7 H1796.9 A4,4 0 0 0 1792.9,402.7 V415.1 A4,4 0 0 0 1796.9,419.1 H1808.7 A4,4 0 0 0 1812.7,415.1 V405.2" fill="none" stroke="#e6e6e6" stroke-width="2"/>
<path transform="translate(1801.30 406.20) rotate(20)" d="M0.00,-2.24 L1.18,-1.18 L2.24,-0.00 L1.18,1.18 L0.00,2.24 L-1.18,1.18 L-2.24,0.00 L-1.18,-1.18Z" fill="#e6e6e6" fill-rule="evenodd" stroke="#e6e6e6" stroke-width="0.9" stroke-linejoin="round"/>
<path transform="translate(1811.20 399.10) rotate(22)" d="M0.00,-5.30 L1.82,-1.82 L5.30,-0.00 L1.82,1.82 L0.00,5.30 L-1.82,1.82 L-5.30,0.00 L-1.82,-1.82Z M1.45,0 A1.45,1.45 0 1 0 -1.45,0 A1.45,1.45 0 1 0 1.45,0Z" fill="#e6e6e6" fill-rule="evenodd" stroke="#e6e6e6" stroke-width="1.4" stroke-linejoin="round"/>
<g fill="none" stroke="#d8d8d8" stroke-width="2"><path d="M1365.2,986.8 C1359.2,982.2 1362.4,973.4 1368.3,973.4 C1374.2,973.4 1377.4,982.2 1371.4,986.8 V993.2 Q1371.4,995.9 1368.3,995.9 Q1365.2,995.9 1365.2,993.2Z" stroke-linejoin="round"/><path d="M1365.6,990.2 h5.4 M1366.2,993.3 h4.2" stroke-width="1.4"/></g><g fill="#d8d8d8"><circle cx="1368.3" cy="969.7" r="1.5"/><circle cx="1360.4" cy="972.9" r="1.5"/><circle cx="1376.2" cy="972.9" r="1.5"/><circle cx="1357.4" cy="980.8" r="1.5"/><circle cx="1379.3" cy="980.8" r="1.5"/></g>
<path d="M1859.6,970 L1881.5,982.8 L1859.6,995.2 L1864.4,982.6Z M1864.4,982.6 L1881,982.8" fill="none" stroke="#717171" stroke-width="2" stroke-linejoin="miter"/>
<g fill="none" stroke="#c3c1ff" stroke-width="2.4" stroke-linecap="butt"><path d="M1963.55,97.85 H1953.05 A3,3 0 0 0 1950.05,100.85 V116.45 A3,3 0 0 0 1953.05,119.45 H1971.85 A3,3 0 0 0 1974.85,116.45 V104.85"/><path d="M1954.60,102.55 h5.80 M1954.60,108.45 h2.50 M1954.60,114.25 h5.80" stroke-width="2.30" stroke-linecap="round"/></g><path transform="translate(1962.35 108.15) rotate(20)" d="M0.00,-2.80 L1.42,-1.42 L2.80,-0.00 L1.42,1.42 L0.00,2.80 L-1.42,1.42 L-2.80,0.00 L-1.42,-1.42Z" fill="#c3c1ff" fill-rule="evenodd" stroke="#c3c1ff" stroke-width="0.9" stroke-linejoin="round"/><path transform="translate(1971.15 99.45) rotate(24)" d="M0.00,-5.70 L1.98,-1.98 L5.70,-0.00 L1.98,1.98 L0.00,5.70 L-1.98,1.98 L-5.70,0.00 L-1.98,-1.98Z M1.60,0 A1.60,1.60 0 1 0 -1.60,0 A1.60,1.60 0 1 0 1.60,0Z" fill="#c3c1ff" fill-rule="evenodd" stroke="#c3c1ff" stroke-width="1.6" stroke-linejoin="round"/>
<g fill="none" stroke="#cfcfcf" stroke-width="2.3" stroke-linecap="round"><path d="M1975.2,180.1 H1965.6 A9.6,9.6 0 1 1 1975.2,170.5Z" stroke-linejoin="round"/><path d="M1961.2,169.7 h8.2 M1961.2,174.1 h5.6" stroke-width="1.8"/><path d="M1953.4,166.8 C1947.5,174 1951.5,185 1962.5,185.3 C1966,185.4 1969,185 1971.2,184.5"/></g>
<g fill="none" stroke="#cfcfcf" stroke-width="2.1"><path d="M1950.4,221.5 H1965.9 V245.2 L1958.2,239.8 L1950.4,245.2Z" stroke-linejoin="miter"/><path d="M1969,226.6 h8.2 M1969,230.8 h8.2 M1969,235 h8.2" stroke-width="1.8"/></g>
<g fill="none" stroke="#cfcfcf" stroke-width="2.1" stroke-linejoin="round"><path d="M1965.2,281.8 H1954.4 A3,3 0 0 0 1951.4,284.8 V298.8 A3,3 0 0 0 1954.4,301.8 H1955"/><path d="M1960.8,285.7 H1968.8 L1974.7,291.2 V304.2 A3,3 0 0 1 1971.7,307.2 H1960.8 A3,3 0 0 1 1957.8,304.2 V288.7 A3,3 0 0 1 1960.8,285.7Z"/><path d="M1967.8,286 V293 H1974.6" stroke-width="1.9"/></g>
<path d="M1958.2,815.6 L1964.6,809.2 L1971,815.6" fill="none" stroke="#6e6e6e" stroke-width="2.6"/>
<path d="M1958.2,862 L1964.6,868.4 L1971,862" fill="none" stroke="#e2e2e2" stroke-width="2.6"/>
<g fill="none" stroke="#cfcfcf" stroke-width="2.3"><path d="M1975.4,929.3 A11,11 0 1 1 1973,916.2"/><path d="M1976.6,912.8 V920 H1969.2" stroke-linejoin="miter"/></g>
<path d="M1957.8,966.4 H1969 L1974.5,972 V988 A2.8,2.8 0 0 1 1971.7,990.8 H1957.8 A2.8,2.8 0 0 1 1955,988 V969.2 A2.8,2.8 0 0 1 1957.8,966.4Z" fill="none" stroke="#cfcfcf" stroke-width="2.4"/><path d="M1968.4,966 L1974.9,972.6 H1968.4Z" fill="#cfcfcf"/>
<path d="M1983.2,990.1999999999999 L1983.2,997.8 L1975.6000000000001,997.8Z" fill="#c8c8c8"/>
</svg>
</body>
</html>
